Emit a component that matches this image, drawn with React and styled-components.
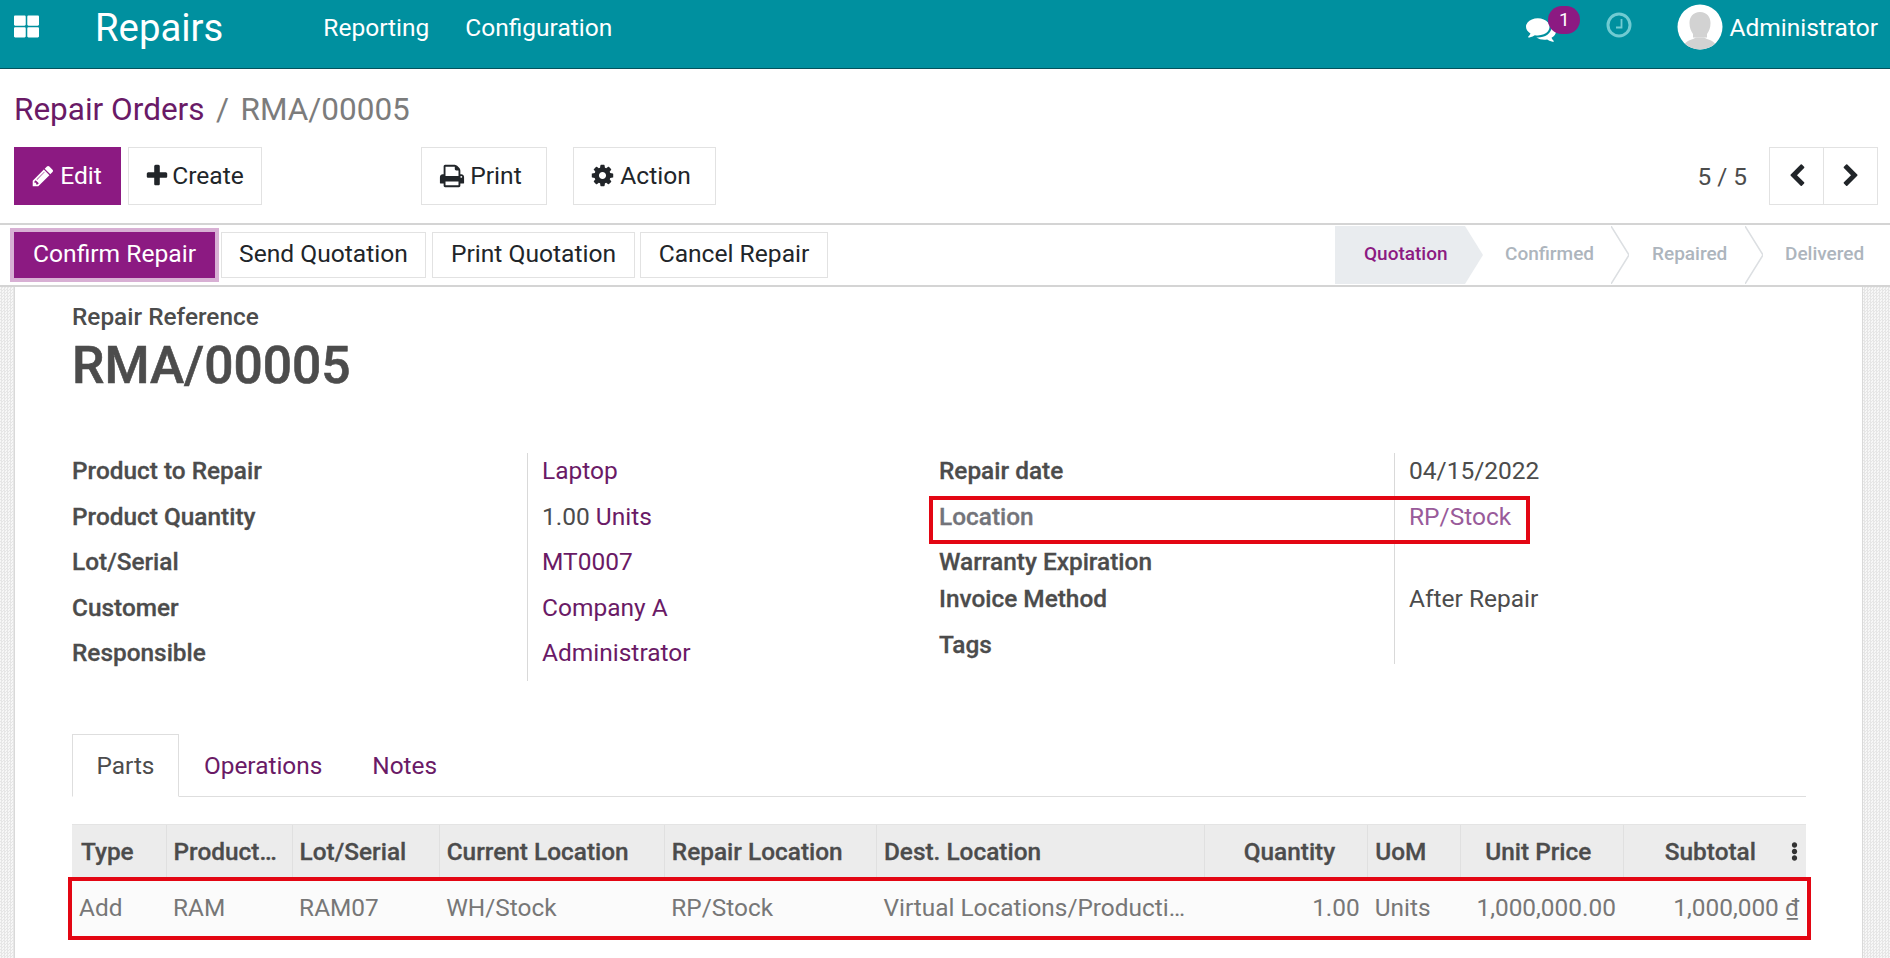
import React from 'react';
import styled, { createGlobalStyle } from 'styled-components';
import { FaThLarge, FaEllipsisV } from 'react-icons/fa';

const Global = createGlobalStyle`
  html, body { margin: 0; padding: 0; background: #fff; }
  body { font-family: Roboto, "Liberation Sans", sans-serif; color: #4c4c4c; }
`;

// font awesome 4 outlines, the react-icons set only has the newer ones
const icons = {
  pencil: 'M491 1536l91-91-235-235-91 91v107h128v128h107zm523-928q0-22-22-22-10 0-17 7l-542 542q-7 7-7 17 0 22 22 22 10 0 17-7l542-542q7-7 7-17zm-54-192l416 416-832 832h-416v-416zm683 96q0 53-37 90l-166 166-416-416 166-165q36-38 90-38 53 0 91 38l235 234q37 39 37 91z',
  plus: 'M1600 736v192q0 40-28 68t-68 28h-416v416q0 40-28 68t-68 28h-192q-40 0-68-28t-28-68v-416h-416q-40 0-68-28t-28-68v-192q0-40 28-68t68-28h416v-416q0-40 28-68t68-28h192q40 0 68 28t28 68v416h416q40 0 68 28t28 68z',
  print: 'M448 1536h896v-256h-896v256zm0-640h896v-384h-160q-40 0-68-28t-28-68v-160h-640v640zm1152 64q0-26-19-45t-45-19-45 19-19 45 19 45 45 19 45-19 19-45zm128 0v416q0 13-9.5 22.5t-22.5 9.5h-224v160q0 40-28 68t-68 28h-960q-40 0-68-28t-28-68v-160h-224q-13 0-22.5-9.5t-9.5-22.5v-416q0-79 56.5-135.5t135.5-56.5h64v-544q0-40 28-68t68-28h672q40 0 88 20t76 48l152 152q28 28 48 76t20 88v256h64q79 0 135.5 56.5t56.5 135.5z',
  cog: 'M1152 896q0-106-75-181t-181-75-181 75-75 181 75 181 181 75 181-75 75-181zm512-109v222q0 12-8 23t-20 13l-185 28q-19 54-39 91 35 50 107 138 10 12 10 25t-9 23q-27 37-99 108t-94 71q-12 0-26-9l-138-108q-44 23-91 38-16 136-29 186-7 28-36 28h-222q-14 0-24.5-8.5t-11.5-21.5l-28-184q-49-16-90-37l-141 107q-10 9-25 9-14 0-25-11-126-114-165-168-7-10-7-23 0-12 8-23 15-21 51-66.5t54-70.5q-27-50-41-99l-183-27q-13-2-21-12.5t-8-23.5v-222q0-12 8-23t19-13l186-28q14-46 39-92-40-57-107-138-10-12-10-24 0-10 9-23 26-36 98.5-107.5t94.5-71.5q13 0 26 10l138 107q44-23 91-38 16-136 29-186 7-28 36-28h222q14 0 24.5 8.5t11.5 21.5l28 184q49 16 90 37l142-107q9-9 24-9 13 0 25 10 129 119 165 170 7 8 7 22 0 12-8 23-15 21-51 66.5t-54 70.5q26 50 41 98l183 28q13 2 21 12.5t8 23.5z',
  left: 'M1427 301l-531 531 531 531q19 19 19 45t-19 45l-166 166q-19 19-45 19t-45-19l-742-742q-19-19-19-45t19-45l742-742q19-19 45-19t45 19l166 166q19 19 19 45t-19 45z',
  right: 'M1363 877l-742 742q-19 19-45 19t-45-19l-166-166q-19-19-19-45t19-45l531-531-531-531q-19-19-19-45t19-45l166-166q19-19 45-19t45 19l742 742q19 19 19 45t-19 45z',
  comments: 'M1408 768q0 139-94 257t-256.5 186.5-353.5 68.5q-86 0-176-16-124 88-278 128-36 9-86 16h-3q-11 0-20.5-8t-11.5-21q-1-3-1-6.5t.5-6.5 2-6l2.5-5 3.5-5.5 4-5 4.5-5 4-4.5q5-6 23-25t26-29.5 22.5-29 25-38.5 20.5-44q-124-72-195-177t-71-224q0-139 94-257t256.5-186.5 353.5-68.5 353.5 68.5 256.5 186.5 94 257zm384 256q0 120-71 224.5t-195 176.5q10 24 20.5 44t25 38.5 22.5 29 26 29.5 23 25q1 1 4 4.5t4.5 5 4 5 3.5 5.5l2.5 5 2 6 .5 6.5-1 6.5q-3 14-13 22t-22 7q-50-7-86-16-154-40-278-128-90 16-176 16-271 0-472-132 58 4 88 4 161 0 309-45t264-129q125-92 192-212t67-254q0-77-23-152 129 71 204 178t75 230z',
};

const Glyph = styled.svg`
  flex: none;
  fill: currentColor;
`;
const Fa = ({ name, size }) => (
  <Glyph viewBox="0 0 1792 1792" width={size} height={size}>
    <path d={icons[name]} />
  </Glyph>
);

const Page = styled.div`
  width: 1890px;
  height: 958px;
  overflow: hidden;
  display: flex;
  flex-direction: column;
`;

const Nav = styled.nav`
  height: 69px;
  flex: none;
  box-sizing: border-box;
  display: flex;
  align-items: center;
  background: #00909f;
  border-bottom: 1px solid #04525c;
  color: #fff;
  padding: 0 12px 14px 14px;
`;
const Apps = styled(FaThLarge)`
  font-size: 25px;
  margin: -1px 56px 0 0;
`;
const Brand = styled.div`
  font-size: 38.3px;
  margin-right: 100px;
`;
const NavLink = styled.a`
  font-size: 24.5px;
  margin-right: 36px;
`;
const NavRight = styled.div`
  margin-left: auto;
  display: flex;
  align-items: center;
`;
const Chat = styled.div`
  position: relative;
  width: 53px;
  height: 32px;
  margin-right: 26px;
  & > svg { position: absolute; left: -1px; top: 3px; }
`;
const Badge = styled.span`
  position: absolute;
  left: 21px;
  top: -5px;
  width: 32px;
  height: 28px;
  border-radius: 14px;
  background: #8c1a82;
  font-size: 19px;
  line-height: 28px;
  text-align: center;
`;
const ClockIcon = styled.svg`
  width: 26px;
  height: 26px;
  margin: -4px 45px 0 0;
`;
const Avatar = styled.svg`
  width: 46px;
  height: 46px;
  margin-right: 6px;
`;
const UserName = styled.span`
  font-size: 24.5px;
`;

const ControlPanel = styled.div`
  height: 154px;
  flex: none;
  padding: 0 12px 0 14px;
  box-sizing: border-box;
  display: flex;
  flex-direction: column;
`;
const Crumbs = styled.div`
  height: 78px;
  flex: none;
  display: flex;
  align-items: center;
  font-size: 31.5px;
  color: #7c7c7c;
  padding-top: 3px;
  box-sizing: border-box;
`;
const CrumbLink = styled.a`
  color: #6a1a66;
`;
const CrumbSep = styled.span`
  margin: 0 11.5px;
`;
const Toolbar = styled.div`
  display: flex;
  align-items: center;
`;
const Button = styled.button`
  height: 58px;
  box-sizing: border-box;
  padding: 0 ${p => p.$shift || 0}px 1px 0;
  margin-left: ${p => p.$left || 0}px;
  border: 1px solid ${p => (p.$primary ? '#8c1a82' : '#e2e2e2')};
  background: ${p => (p.$primary ? '#8c1a82' : '#fff')};
  color: ${p => (p.$primary ? '#fff' : '#212529')};
  font: 24.6px Roboto, sans-serif;
  display: inline-flex;
  align-items: center;
  justify-content: center;
  gap: ${p => p.$gap ?? 5}px;
  width: ${p => p.$w}px;
`;
const Pager = styled.div`
  margin-left: auto;
  display: flex;
  align-items: center;
  font-size: 24.4px;
  color: #4c4c4c;
`;
const PagerText = styled.span`
  margin-right: 22px;
`;
const PagerButton = styled.button`
  width: ${p => p.$w}px;
  height: 58px;
  box-sizing: border-box;
  border: 1px solid #e2e2e2;
  border-left-width: ${p => (p.$join ? 0 : 1)}px;
  background: #fff;
  color: #212529;
  display: flex;
  align-items: center;
  justify-content: center;
  padding: 0;
`;

const StatusBar = styled.div`
  height: 64px;
  flex: none;
  box-sizing: border-box;
  border-top: 2px solid #d4d4d4;
  border-bottom: 2px solid #d4d4d4;
  display: flex;
  align-items: center;
  padding-left: 14px;
`;
const StateButton = styled.button`
  position: relative;
  z-index: ${p => (p.$primary ? 1 : 0)};
  height: 46px;
  box-sizing: border-box;
  width: ${p => p.$w}px;
  margin-right: ${p => p.$gap}px;
  background: ${p => (p.$primary ? '#8c1a82' : '#fff')};
  color: ${p => (p.$primary ? '#fff' : '#212529')};
  border: 1px solid ${p => (p.$primary ? '#8c1a82' : '#e2e2e2')};
  box-shadow: ${p => (p.$primary ? '0 0 0 4px #d8b0d4' : 'none')};
  font: 24.6px/1 Roboto, sans-serif;
  padding: 0 0 2px;
`;
const Steps = styled.div`
  margin-left: auto;
  display: flex;
  align-self: stretch;
`;
const Step = styled.div`
  position: relative;
  width: ${p => p.$w}px;
  margin-top: 1px;
  height: 58px;
  background: ${p => (p.$active ? '#e9ecef' : 'transparent')};
  color: ${p => (p.$active ? '#8c1a82' : '#adb5bd')};
  font-size: 19px;
  font-weight: 500;
  display: flex;
  align-items: center;
  padding: 0 0 4px ${p => p.$pad}px;
  box-sizing: border-box;
`;
const StepArrow = styled.svg`
  position: absolute;
  left: 100%;
  top: 0;
  width: 18px;
  height: 58px;
  z-index: 1;
`;

const Backdrop = styled.div`
  flex: 1;
  min-height: 0;
  background-color: #fff;
  background-image: conic-gradient(#e6e6e6 25%, #f7f7f7 0 50%, #e6e6e6 0 75%, #f7f7f7 0);
  background-size: 3px 3px;
  padding: 0 27px 0 14px;
`;
const Sheet = styled.div`
  height: 100%;
  box-sizing: border-box;
  background: #fff;
  border-left: 1px solid #d9d9d9;
  border-right: 1px solid #d9d9d9;
  padding: 15px 56px 0 57px;
  position: relative;
`;
const RefLabel = styled.div`
  font-size: 24.4px;
  font-weight: 500;
  line-height: 30px;
`;
const RefTitle = styled.h1`
  margin: 3px 0 0;
  font-size: 51.5px;
  font-weight: 500;
  line-height: 62px;
  -webkit-text-stroke: 0.6px #4c4c4c;
`;
const Groups = styled.div`
  display: grid;
  grid-template-columns: 867px 1fr;
  margin-top: 56px;
`;
const Group = styled.div`
  display: flex;
  flex-direction: column;
`;
const Row = styled.div`
  position: relative;
  display: grid;
  grid-template-columns: 455px 1fr;
  height: ${p => p.$h || 45.6}px;
`;
const Label = styled.div`
  font-size: 24.4px;
  font-weight: 500;
  line-height: 36px;
  color: ${p => (p.$dim ? '#73747a' : '#4c4c4c')};
  -webkit-text-stroke: 0.3px currentColor;
`;
const Value = styled.div`
  border-left: 1px solid #d9d9d9;
  padding-left: 14px;
  font-size: 24.5px;
  line-height: 36px;
  color: #4c4c4c;
`;
const Link = styled.a`
  color: ${p => (p.$soft ? '#995b9a' : '#6a1a66')};
`;
const RedBox = styled.div`
  position: absolute;
  left: ${p => p.$l}px;
  right: ${p => p.$r}px;
  top: ${p => p.$t}px;
  bottom: ${p => p.$b}px;
  border: 4px solid #e30613;
  pointer-events: none;
`;

const TabBar = styled.div`
  display: flex;
  margin-top: 53px;
  border-bottom: 1px solid #dedede;
  height: 62px;
`;
const Tab = styled.a`
  display: flex;
  align-items: center;
  height: 63px;
  box-sizing: border-box;
  padding: 0 ${p => p.$pad}px;
  font-size: 24.4px;
  color: ${p => (p.$active ? '#4c4c4c' : '#6a1a66')};
  background: ${p => (p.$active ? '#fff' : 'transparent')};
  border: 1px solid ${p => (p.$active ? '#dedede' : 'transparent')};
  border-bottom-color: ${p => (p.$active ? '#fff' : 'transparent')};
`;
const TableWrap = styled.div`
  margin-top: 27px;
  position: relative;
`;
const Table = styled.table`
  width: 100%;
  table-layout: fixed;
  border-collapse: collapse;
  font-size: 24.4px;
`;
const Th = styled.th`
  position: relative;
  height: 53px;
  padding: 0 ${p => p.$right ?? 9}px 0 ${p => (p.$first ? 9 : 7)}px;
  background: #ececec;
  font-weight: 500;
  text-align: ${p => p.$align || 'left'};
  border-left: ${p => (p.$first ? 0 : 1)}px solid #e0e0e0;
  border-top: 1px solid #e4e4e4;
  white-space: nowrap;
  overflow: hidden;
  color: #4c4c4c;
  -webkit-text-stroke: 0.3px currentColor;
`;
const Td = styled.td`
  height: 58px;
  padding: 1px ${p => p.$right ?? 8}px 0 7px;
  background: #fbfbfb;
  color: #777;
  text-align: ${p => p.$align || 'left'};
  white-space: nowrap;
  overflow: hidden;
  text-overflow: ellipsis;
`;
const Dots = styled(FaEllipsisV)`
  position: absolute;
  right: 2px;
  top: 17px;
  font-size: 19px;
  color: #333;
`;
const Dong = styled.span`
  text-decoration: underline;
`;

const columns = [
  { label: 'Type', w: 94 },
  { label: 'Product…', w: 126 },
  { label: 'Lot/Serial', w: 147 },
  { label: 'Current Location', w: 225 },
  { label: 'Repair Location', w: 212 },
  { label: 'Dest. Location', w: 328 },
  { label: 'Quantity', w: 163, align: 'right', right: 32 },
  { label: 'UoM', w: 93 },
  { label: 'Unit Price', w: 163, align: 'right', right: 32 },
  { label: 'Subtotal', w: 182, align: 'right', right: 50, dots: true },
];

const cells = [
  ['Add'], ['RAM'], ['RAM07'], ['WH/Stock'], ['RP/Stock'],
  ['Virtual Locations/Producti…'], ['1.00', 'right'], ['Units'], ['1,000,000.00', 'right'],
];

function UserPhoto() {
  return (
    <Avatar viewBox="0 0 46 46">
      <defs>
        <clipPath id="av"><circle cx="23" cy="23" r="22.5" /></clipPath>
      </defs>
      <g clipPath="url(#av)">
        <rect width="46" height="46" fill="#fff" />
        <path d="M23 8c7 0 10.500 5 10.500 11 0 5-1.500 8-3.500 11v3.500l-14 0V30c-2-3-3.500-6-3.500-11C12.500 13 16 8 23 8z" fill="#d2d2d2" />
        <path d="M6 46c0-7 4-9 10-11l3-1.500h8l3 1.500c6 2 10 4 10 11z" fill="#d2d2d2" />
      </g>
    </Avatar>
  );
}

function Clock() {
  return (
    <ClockIcon viewBox="0 0 26 26">
      <circle cx="13" cy="13" r="11" fill="none" stroke="#70cbd2" strokeWidth="3" />
      <path d="M15.500 7v8.500H10" fill="none" stroke="#70cbd2" strokeWidth="1.800" />
    </ClockIcon>
  );
}

function Arrow({ active }) {
  return (
    <StepArrow viewBox="0 0 18 58" preserveAspectRatio="none">
      {active
        ? <path d="M0 0L18 29L0 58z" fill="#e9ecef" />
        : <path d="M0 0L18 29L0 58" fill="none" stroke="#dcdfe2" strokeWidth="1.5" />}
    </StepArrow>
  );
}

export default function App() {
  return (
    <Page>
      <Global />
      <Nav>
        <Apps />
        <Brand>Repairs</Brand>
        <NavLink>Reporting</NavLink>
        <NavLink>Configuration</NavLink>
        <NavRight>
          <Chat>
            <Fa name="comments" size={30} />
            <Badge>1</Badge>
          </Chat>
          <Clock />
          <UserPhoto />
          <UserName>Administrator</UserName>
        </NavRight>
      </Nav>

      <ControlPanel>
        <Crumbs>
          <CrumbLink>Repair Orders</CrumbLink>
          <CrumbSep>/</CrumbSep>
          RMA/00005
        </Crumbs>
        <Toolbar>
          <Button $primary $w={107} $shift={2}><Fa name="pencil" size={24} />Edit</Button>
          <Button $left={7} $w={134} $gap={2} $shift={2}><Fa name="plus" size={26} />Create</Button>
          <Button $left={159} $w={126} $shift={7}><Fa name="print" size={26} />Print</Button>
          <Button $left={26} $w={143} $shift={8}><Fa name="cog" size={25} />Action</Button>
          <Pager>
            <PagerText>5 / 5</PagerText>
            <PagerButton $w={55}><Fa name="left" size={24} /></PagerButton>
            <PagerButton $w={54} $join><Fa name="right" size={24} /></PagerButton>
          </Pager>
        </Toolbar>
      </ControlPanel>

      <StatusBar>
        <StateButton $primary $w={201} $gap={6}>Confirm Repair</StateButton>
        <StateButton $w={205} $gap={6}>Send Quotation</StateButton>
        <StateButton $w={203} $gap={5}>Print Quotation</StateButton>
        <StateButton $w={188} $gap={0}>Cancel Repair</StateButton>
        <Steps>
          <Step $active $w={130} $pad={29}>Quotation<Arrow active /></Step>
          <Step $w={146} $pad={40}>Confirmed<Arrow /></Step>
          <Step $w={134} $pad={41}>Repaired<Arrow /></Step>
          <Step $w={145} $pad={40}>Delivered</Step>
        </Steps>
      </StatusBar>

      <Backdrop>
        <Sheet>
          <RefLabel>Repair Reference</RefLabel>
          <RefTitle>RMA/00005</RefTitle>
          <Groups>
            <Group>
              <Row><Label>Product to Repair</Label><Value><Link>Laptop</Link></Value></Row>
              <Row><Label>Product Quantity</Label><Value>1.00 <Link>Units</Link></Value></Row>
              <Row><Label>Lot/Serial</Label><Value><Link>MT0007</Link></Value></Row>
              <Row><Label>Customer</Label><Value><Link>Company A</Link></Value></Row>
              <Row><Label>Responsible</Label><Value><Link>Administrator</Link></Value></Row>
            </Group>
            <Group>
              <Row $h={46}><Label>Repair date</Label><Value>04/15/2022</Value></Row>
              <Row $h={45}>
                <Label $dim>Location</Label>
                <Value><Link $soft>RP/Stock</Link></Value>
                <RedBox $l={-10} $r={276} $t={-3} $b={0} />
              </Row>
              <Row $h={37}><Label>Warranty Expiration</Label><Value /></Row>
              <Row $h={46}><Label>Invoice Method</Label><Value>After Repair</Value></Row>
              <Row $h={37}><Label>Tags</Label><Value /></Row>
            </Group>
          </Groups>
          <TabBar>
            <Tab $active $pad={23.5}>Parts</Tab>
            <Tab $pad={24}>Operations</Tab>
            <Tab $pad={24}>Notes</Tab>
          </TabBar>
          <TableWrap>
            <Table>
              <colgroup>
                {columns.map(c => <col key={c.label} style={{ width: c.w }} />)}
              </colgroup>
              <thead>
                <tr>
                  {columns.map((c, i) => (
                    <Th key={c.label} $align={c.align} $right={c.right} $first={i === 0}>
                      {c.label}
                      {c.dots && <Dots />}
                    </Th>
                  ))}
                </tr>
              </thead>
              <tbody>
                <tr>
                  {cells.map(([t, a]) => <Td key={t} $align={a}>{t}</Td>)}
                  <Td $align="right" $right={7}>1,000,000 <Dong>₫</Dong></Td>
                </tr>
              </tbody>
            </Table>
            <RedBox $l={-4} $r={-5} $t={53} $b={-3} />
          </TableWrap>
        </Sheet>
      </Backdrop>
    </Page>
  );
}
